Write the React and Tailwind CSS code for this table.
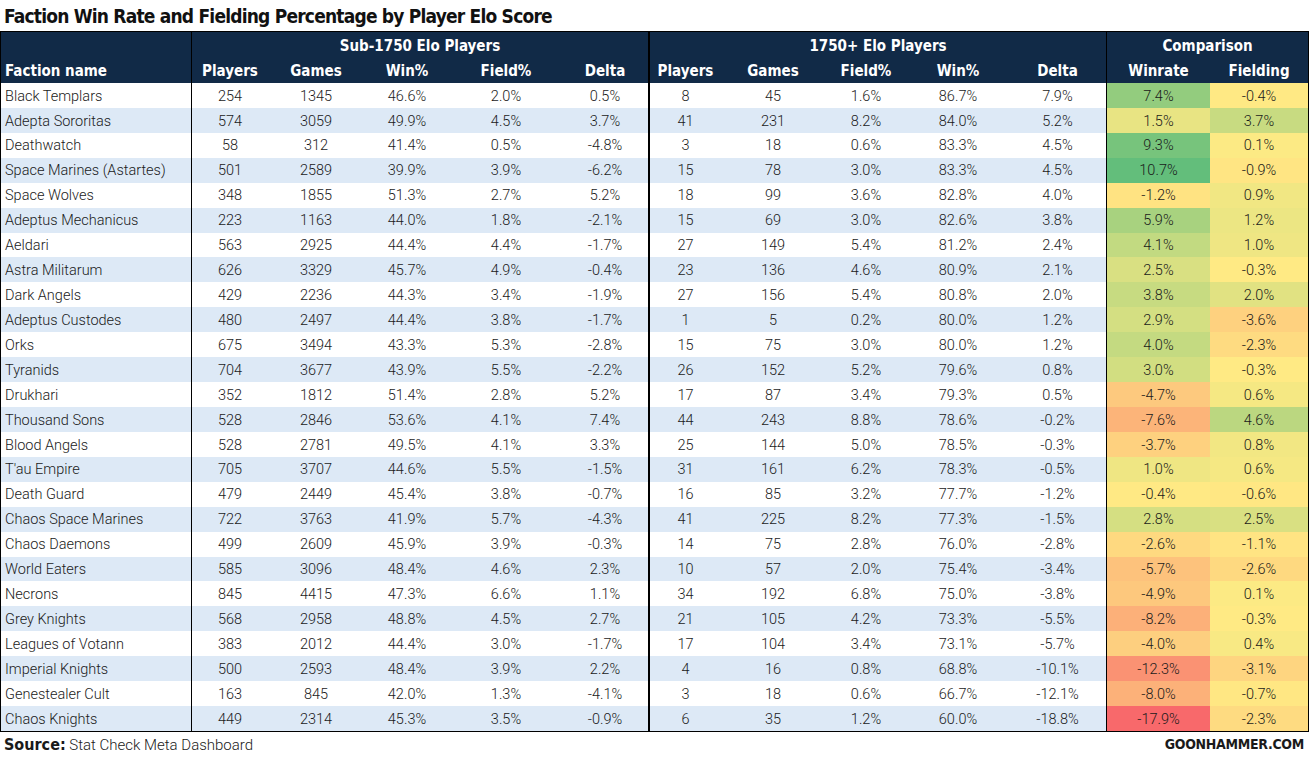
import React from "react";

const rows = [
  ["Black Templars", 254, 1345, "46.6%", "2.0%", "0.5%", 8, 45, "1.6%", "86.7%", "7.9%", 7.4, -0.4],
  ["Adepta Sororitas", 574, 3059, "49.9%", "4.5%", "3.7%", 41, 231, "8.2%", "84.0%", "5.2%", 1.5, 3.7],
  ["Deathwatch", 58, 312, "41.4%", "0.5%", "-4.8%", 3, 18, "0.6%", "83.3%", "4.5%", 9.3, 0.1],
  ["Space Marines (Astartes)", 501, 2589, "39.9%", "3.9%", "-6.2%", 15, 78, "3.0%", "83.3%", "4.5%", 10.7, -0.9],
  ["Space Wolves", 348, 1855, "51.3%", "2.7%", "5.2%", 18, 99, "3.6%", "82.8%", "4.0%", -1.2, 0.9],
  ["Adeptus Mechanicus", 223, 1163, "44.0%", "1.8%", "-2.1%", 15, 69, "3.0%", "82.6%", "3.8%", 5.9, 1.2],
  ["Aeldari", 563, 2925, "44.4%", "4.4%", "-1.7%", 27, 149, "5.4%", "81.2%", "2.4%", 4.1, 1.0],
  ["Astra Militarum", 626, 3329, "45.7%", "4.9%", "-0.4%", 23, 136, "4.6%", "80.9%", "2.1%", 2.5, -0.3],
  ["Dark Angels", 429, 2236, "44.3%", "3.4%", "-1.9%", 27, 156, "5.4%", "80.8%", "2.0%", 3.8, 2.0],
  ["Adeptus Custodes", 480, 2497, "44.4%", "3.8%", "-1.7%", 1, 5, "0.2%", "80.0%", "1.2%", 2.9, -3.6],
  ["Orks", 675, 3494, "43.3%", "5.3%", "-2.8%", 15, 75, "3.0%", "80.0%", "1.2%", 4.0, -2.3],
  ["Tyranids", 704, 3677, "43.9%", "5.5%", "-2.2%", 26, 152, "5.2%", "79.6%", "0.8%", 3.0, -0.3],
  ["Drukhari", 352, 1812, "51.4%", "2.8%", "5.2%", 17, 87, "3.4%", "79.3%", "0.5%", -4.7, 0.6],
  ["Thousand Sons", 528, 2846, "53.6%", "4.1%", "7.4%", 44, 243, "8.8%", "78.6%", "-0.2%", -7.6, 4.6],
  ["Blood Angels", 528, 2781, "49.5%", "4.1%", "3.3%", 25, 144, "5.0%", "78.5%", "-0.3%", -3.7, 0.8],
  ["T'au Empire", 705, 3707, "44.6%", "5.5%", "-1.5%", 31, 161, "6.2%", "78.3%", "-0.5%", 1.0, 0.6],
  ["Death Guard", 479, 2449, "45.4%", "3.8%", "-0.7%", 16, 85, "3.2%", "77.7%", "-1.2%", -0.4, -0.6],
  ["Chaos Space Marines", 722, 3763, "41.9%", "5.7%", "-4.3%", 41, 225, "8.2%", "77.3%", "-1.5%", 2.8, 2.5],
  ["Chaos Daemons", 499, 2609, "45.9%", "3.9%", "-0.3%", 14, 75, "2.8%", "76.0%", "-2.8%", -2.6, -1.1],
  ["World Eaters", 585, 3096, "48.4%", "4.6%", "2.3%", 10, 57, "2.0%", "75.4%", "-3.4%", -5.7, -2.6],
  ["Necrons", 845, 4415, "47.3%", "6.6%", "1.1%", 34, 192, "6.8%", "75.0%", "-3.8%", -4.9, 0.1],
  ["Grey Knights", 568, 2958, "48.8%", "4.5%", "2.7%", 21, 105, "4.2%", "73.3%", "-5.5%", -8.2, -0.3],
  ["Leagues of Votann", 383, 2012, "44.4%", "3.0%", "-1.7%", 17, 104, "3.4%", "73.1%", "-5.7%", -4.0, 0.4],
  ["Imperial Knights", 500, 2593, "48.4%", "3.9%", "2.2%", 4, 16, "0.8%", "68.8%", "-10.1%", -12.3, -3.1],
  ["Genestealer Cult", 163, 845, "42.0%", "1.3%", "-4.1%", 3, 18, "0.6%", "66.7%", "-12.1%", -8.0, -0.7],
  ["Chaos Knights", 449, 2314, "45.3%", "3.5%", "-0.9%", 6, 35, "1.2%", "60.0%", "-18.8%", -17.9, -2.3],
];

// widths of the 13 columns, borders included
const cols = [
  "w-[191px] border-r border-black justify-start pl-[4px]",
  "w-[76px]",
  "w-[96px]",
  "w-[86px]",
  "w-[112px]",
  "w-[88px] border-r-2 border-black",
  "w-[71px]",
  "w-[104px]",
  "w-[82px]",
  "w-[102px]",
  "w-[98px] border-r border-black",
  "w-[103px]",
  "w-[98px]",
];

const heads = ["Faction name", "Players", "Games", "Win%", "Field%", "Delta", "Players", "Games", "Field%", "Win%", "Delta", "Winrate", "Fielding"];

// Excel style 3-colour scale, shared across both comparison columns
const all = rows.flatMap((r) => [r[11], r[12]]).sort((a, b) => a - b);
const lo = all[0];
const hi = all[all.length - 1];
const mid = (all[all.length / 2 - 1] + all[all.length / 2]) / 2;
const RED = [248, 105, 107];
const YEL = [255, 235, 132];
const GRN = [99, 190, 123];
const mix = (a, b, t) => a.map((v, i) => Math.round(v + (b[i] - v) * t));
function scale(v) {
  const c = v <= mid ? mix(RED, YEL, (v - lo) / (mid - lo)) : mix(YEL, GRN, (v - mid) / (hi - mid));
  return `rgb(${c.join(",")})`;
}
const pct = (v) => `${v.toFixed(1)}%`;

const head = "font-['Liberation_Sans_Narrow','DejaVu_Sans_Condensed',sans-serif] font-bold";

export default function App() {
  return (
    <div className="w-[1310px] h-[759px] bg-white text-[#1a1a1a] overflow-hidden">
      <h1 className={`${head} text-[19px] tracking-[-0.8px] leading-none pl-[4px] pt-[7px] h-[31px] text-[#111]`}>
        Faction Win Rate and Fielding Percentage by Player Elo Score
      </h1>

      <div className="w-[1309px] border border-black">
        {/* header */}
        <div className={`bg-[#112a47] text-white ${head} text-[15px]`}>
          <div className="flex h-[25px]">
            <div className="w-[191px] border-r border-black" />
            <div className="w-[458px] border-r-2 border-black flex items-end justify-center">Sub-1750 Elo Players</div>
            <div className="w-[457px] border-r border-black flex items-end justify-center">1750+ Elo Players</div>
            <div className="w-[201px] flex items-end justify-center">Comparison</div>
          </div>
          <div className="flex h-[26px]">
            {heads.map((h, i) => (
              <div key={i} className={`${cols[i]} flex items-center justify-center pt-[3px]`}>
                {h}
              </div>
            ))}
          </div>
        </div>

        {/* body */}
        <div className="grid grid-rows-[repeat(26,1fr)] h-[648px] font-['Roboto',sans-serif] text-[14.5px] font-light">
          {rows.map((r, ri) => (
            <div key={r[0]} className={`flex ${ri % 2 ? "bg-[#dde9f6]" : "bg-white"}`}>
              {r.slice(0, 11).map((v, ci) => (
                <div key={ci} className={`${cols[ci]} flex items-center justify-center pt-[2px]`}>
                  {v}
                </div>
              ))}
              <div className={`${cols[11]} flex items-center justify-center pt-[2px]`} style={{ backgroundColor: scale(r[11]) }}>
                {pct(r[11])}
              </div>
              <div className={`${cols[12]} flex items-center justify-center pt-[2px]`} style={{ backgroundColor: scale(r[12]) }}>
                {pct(r[12])}
              </div>
            </div>
          ))}
        </div>
      </div>

      <div className="flex items-center justify-between h-[25px] px-[4px] text-[15px]">
        <div className="font-['Roboto',sans-serif] font-light">
          <span className={`${head} text-[16px]`}>Source:</span> Stat Check Meta Dashboard
        </div>
        <div className={`${head} text-[14px] tracking-[-0.3px] pr-[2px]`}>GOONHAMMER.COM</div>
      </div>
    </div>
  );
}
